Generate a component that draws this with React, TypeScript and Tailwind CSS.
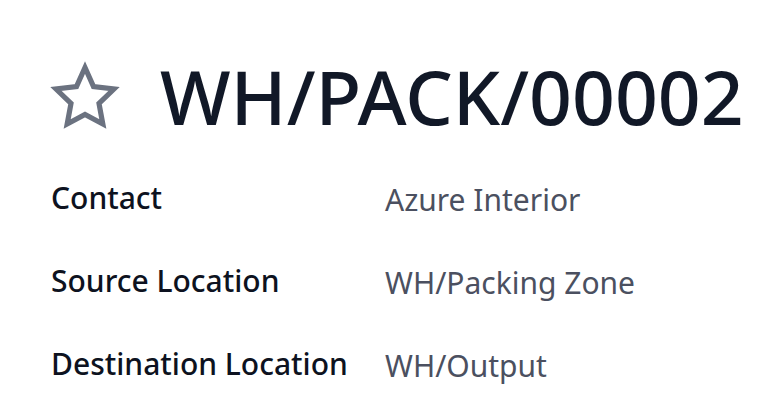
import React from "react";

const fields = [
  { label: "Contact", value: "Azure Interior" },
  { label: "Source Location", value: "WH/Packing Zone" },
  { label: "Destination Location", value: "WH/Output" },
];

export default function App() {
  return (
    <main className="min-h-screen bg-white px-[50px] pt-12 font-['Noto_Sans',sans-serif]">
      <header className="flex items-center gap-10">
        <button type="button" aria-label="Toggle priority" className="shrink-0">
          <svg viewBox="0 0 70 70" className="size-[70px]" fill="none" stroke="#6b7280" strokeWidth="5.2" strokeLinejoin="miter">
            <path d="M35 6.5 L43.5 25.5 L64 28 L49 42.5 L52.8 63 L35 53.5 L17.2 63 L21 42.5 L6 28 L26.5 25.5 Z" />
          </svg>
        </button>
        <h1 className="whitespace-nowrap text-[75px] leading-[96px] font-medium text-[#111827]">WH/PACK/00002</h1>
      </header>
      <dl className="mt-[34px] grid grid-cols-[334px_1fr] gap-y-[39px] pl-px text-[30px]">
        {fields.map((field) => (
          <React.Fragment key={field.label}>
            <dt className="whitespace-nowrap leading-10 font-medium text-[#0d1220]">{field.label}</dt>
            <dd className="leading-[44px] text-[#4b5060]">{field.value}</dd>
          </React.Fragment>
        ))}
      </dl>
    </main>
  );
}
